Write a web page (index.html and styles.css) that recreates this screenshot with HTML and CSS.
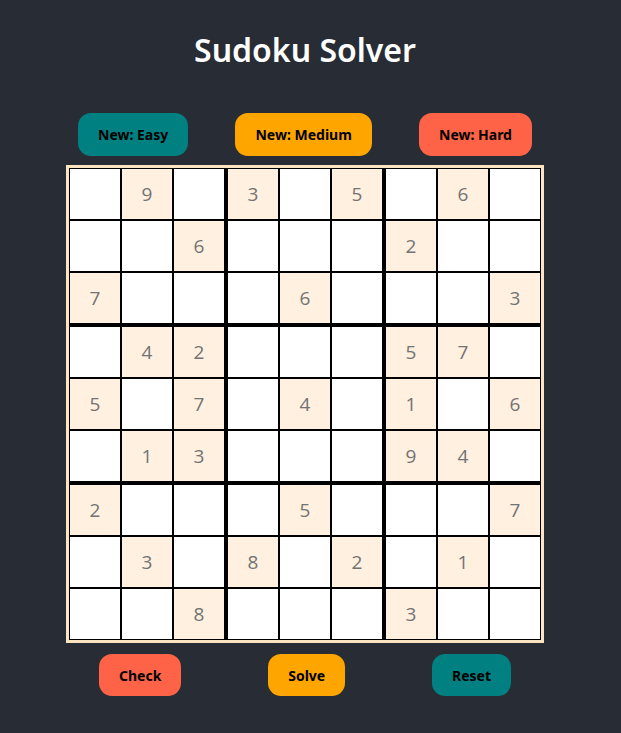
FILE: index.html
```html
<!DOCTYPE html>
<html lang="en">
<head>
<meta charset="utf-8">
<title>Sudoku Solver</title>
<link rel="stylesheet" href="styles.css">
</head>
<body>
<div class="page">
  <h1 class="title">Sudoku Solver</h1>
  <div class="controls top">
    <button class="btn teal">New: Easy</button>
    <button class="btn orange">New: Medium</button>
    <button class="btn tomato">New: Hard</button>
  </div>
  <div class="board">
    <div class="cell"></div><div class="cell given">9</div><div class="cell br"></div><div class="cell given">3</div><div class="cell"></div><div class="cell given br">5</div><div class="cell"></div><div class="cell given">6</div><div class="cell"></div>
    <div class="cell"></div><div class="cell"></div><div class="cell given br">6</div><div class="cell"></div><div class="cell"></div><div class="cell br"></div><div class="cell given">2</div><div class="cell"></div><div class="cell"></div>
    <div class="cell given bb">7</div><div class="cell bb"></div><div class="cell br bb"></div><div class="cell bb"></div><div class="cell given bb">6</div><div class="cell br bb"></div><div class="cell bb"></div><div class="cell bb"></div><div class="cell given bb">3</div>
    <div class="cell"></div><div class="cell given">4</div><div class="cell given br">2</div><div class="cell"></div><div class="cell"></div><div class="cell br"></div><div class="cell given">5</div><div class="cell given">7</div><div class="cell"></div>
    <div class="cell given">5</div><div class="cell"></div><div class="cell given br">7</div><div class="cell"></div><div class="cell given">4</div><div class="cell br"></div><div class="cell given">1</div><div class="cell"></div><div class="cell given">6</div>
    <div class="cell bb"></div><div class="cell given bb">1</div><div class="cell given br bb">3</div><div class="cell bb"></div><div class="cell bb"></div><div class="cell br bb"></div><div class="cell given bb">9</div><div class="cell given bb">4</div><div class="cell bb"></div>
    <div class="cell given">2</div><div class="cell"></div><div class="cell br"></div><div class="cell"></div><div class="cell given">5</div><div class="cell br"></div><div class="cell"></div><div class="cell"></div><div class="cell given">7</div>
    <div class="cell"></div><div class="cell given">3</div><div class="cell br"></div><div class="cell given">8</div><div class="cell"></div><div class="cell given br">2</div><div class="cell"></div><div class="cell given">1</div><div class="cell"></div>
    <div class="cell"></div><div class="cell"></div><div class="cell given br">8</div><div class="cell"></div><div class="cell"></div><div class="cell br"></div><div class="cell given">3</div><div class="cell"></div><div class="cell"></div>
  </div>
  <div class="controls bottom">
    <button class="btn tomato">Check</button>
    <button class="btn orange">Solve</button>
    <button class="btn teal">Reset</button>
  </div>
</div>
</body>
</html>
```

FILE: styles.css
```css
html, body {
  margin: 0;
  padding: 0;
  background: #282c34;
  min-height: 100%;
}

body {
  font-family: "Noto Sans", "Open Sans", "DejaVu Sans", sans-serif;
}

.page {
  display: flex;
  flex-direction: column;
  align-items: center;
  padding-right: 11px;
}

.title {
  margin: 30px 0 0 0;
  height: 40px;
  line-height: 40px;
  font-size: 32px;
  font-weight: 600;
  color: #ffffff;
}

.controls {
  width: 478px;
  box-sizing: border-box;
  display: flex;
  justify-content: space-between;
}

.controls.top {
  margin-top: 43px;
  padding: 0 12px;
}

.controls.bottom {
  margin-top: 11px;
  padding: 0 33px;
}

.btn {
  border: none;
  border-radius: 13px;
  font-family: "Noto Sans", "Open Sans", sans-serif;
  font-weight: 700;
  font-size: 14px;
  color: #000;
  line-height: 19px;
  padding: 12px 20px;
  height: 43px;
  cursor: pointer;
}

.controls.bottom .btn {
  height: 42px;
}

.teal { background: #008080; }
.orange { background: #ffa500; }
.tomato { background: #ff6347; }

.board {
  margin-top: 9px;
  display: grid;
  grid-template-columns: repeat(9, auto);
  background: #ffe4c4;
  padding: 3px;
}

.cell {
  width: 50px;
  height: 50px;
  border: 1px solid #000;
  background: #ffffff;
  display: flex;
  align-items: center;
  justify-content: center;
  font-family: "Open Sans", "Noto Sans", sans-serif;
  font-size: 19px;
  color: #737373;
}

.cell.given {
  background: #fff0e0;
}

.cell.br {
  border-right-width: 3px;
}

.cell.bb {
  border-bottom-width: 3px;
}
```
